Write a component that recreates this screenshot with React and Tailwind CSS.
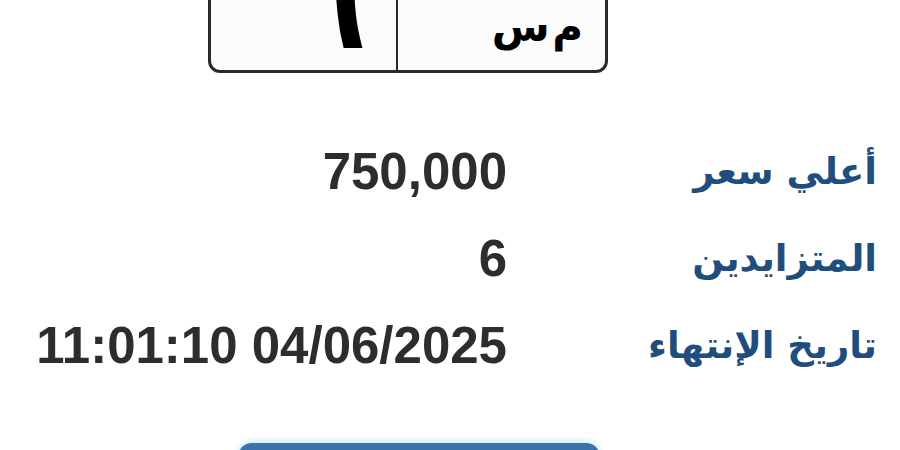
export default function App() {
  const rows = [
    { label: "أعلي سعر", value: "750,000" },
    { label: "المتزايدين", value: "6" },
    { label: "تاريخ الإنتهاء", value: "11:01:10 04/06/2025" },
  ];

  return (
    <div className="h-[450px] w-[900px] overflow-hidden bg-white">
      <div className="ml-[208px] -mt-[40px] flex h-[113px] w-[400px] rounded-[12px] border-[3px] border-[#2a2a2a] bg-[#fbfbfb]">
        <div className="flex flex-1 items-end justify-center pb-[6px]">
          <span className="pl-[62px] font-['DejaVu_Sans',sans-serif] text-[104px] font-bold leading-none text-black">
            ٦
          </span>
        </div>
        <div className="w-[2px] bg-[#2a2a2a]" />
        <div className="flex flex-1 items-end justify-end pb-[22px] pr-[22px]">
          <span
            dir="rtl"
            className="font-['DejaVu_Sans',sans-serif] text-[42px] font-bold leading-none text-black [word-spacing:-12px]"
          >
            م س
          </span>
        </div>
      </div>

      <div className="mt-[67px] flex flex-col gap-[25px]">
        {rows.map((row) => (
          <div key={row.label} className="flex h-[62px] items-center">
            <div className="w-[507px] text-right font-['Liberation_Sans',Arial,sans-serif] text-[51px] font-bold leading-none text-[#2d2d2d]">
              {row.value}
            </div>
            <div
              dir="rtl"
              className="w-[370px] text-right font-['DejaVu_Sans',sans-serif] text-[37px] font-bold leading-none text-[#1f4d7e]"
            >
              {row.label}
            </div>
          </div>
        ))}
      </div>

      <div className="mt-[67px] ml-[238px] h-[40px] w-[362px] rounded-[14px] bg-[#3a72ab] shadow-[0_-2px_6px_rgba(120,180,230,0.35)]" />
    </div>
  );
}
